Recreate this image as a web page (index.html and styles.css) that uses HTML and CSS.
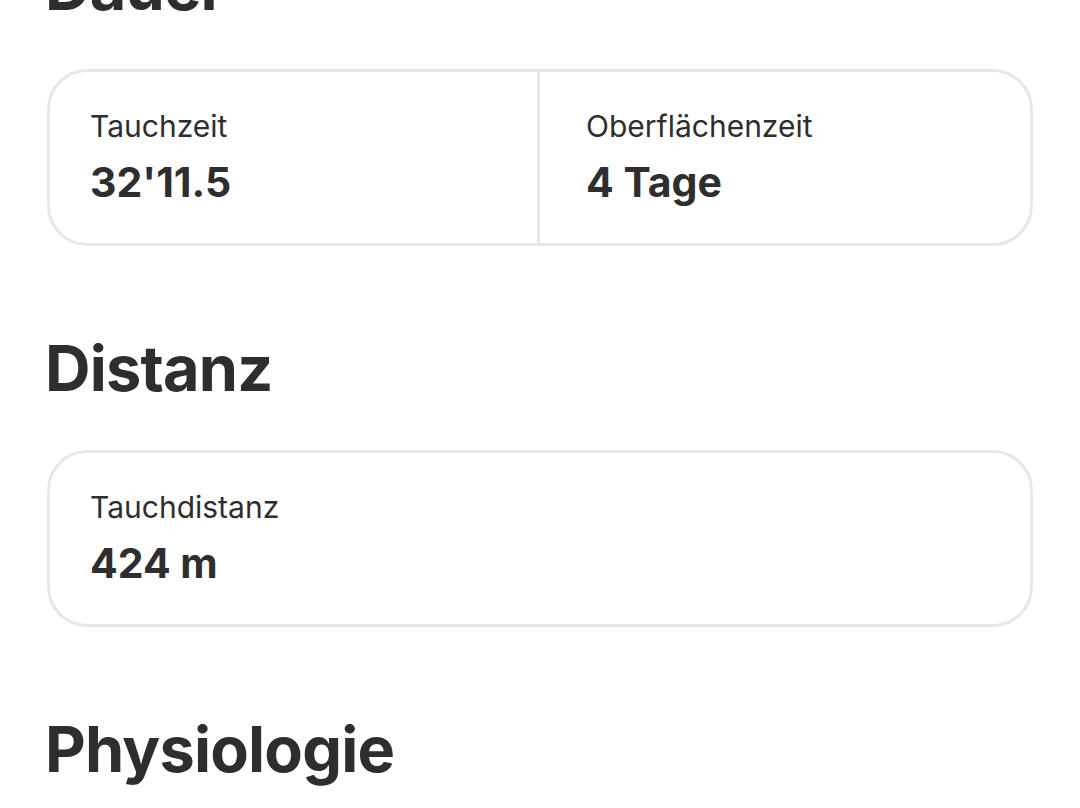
FILE: index.html
```html
<!DOCTYPE html>
<html lang="de">
<head>
<meta charset="utf-8">
<title>Tauchgang</title>
<link rel="stylesheet" href="styles.css">
</head>
<body>
<main class="page">
  <section class="section">
    <h2 class="title">Dauer</h2>
    <div class="card card-split">
      <div class="cell">
        <div class="label">Tauchzeit</div>
        <div class="value">32'11.5</div>
      </div>
      <div class="cell cell-divided">
        <div class="label">Oberflächenzeit</div>
        <div class="value">4 Tage</div>
      </div>
    </div>
  </section>
  <section class="section">
    <h2 class="title">Distanz</h2>
    <div class="card">
      <div class="cell">
        <div class="label">Tauchdistanz</div>
        <div class="value">424 m</div>
      </div>
    </div>
  </section>
  <section class="section">
    <h2 class="title">Physiologie</h2>
  </section>
</main>
</body>
</html>
```
FILE: styles.css
```css
html, body {
  margin: 0;
  padding: 0;
  background: #ffffff;
}
body {
  font-family: Inter, Lato, "Liberation Sans", sans-serif;
  color: #2e2e2e;
  overflow: hidden;
}
.page {
  margin-top: -51px;
  padding: 0 47px;
  display: flex;
  flex-direction: column;
  gap: 84px;
}
.section {
  display: flex;
  flex-direction: column;
  gap: 44px;
}
.title {
  margin: 0 0 0 -2px;
  font-size: 63px;
  line-height: 76px;
  font-weight: 700;
  letter-spacing: -0.8px;
}
.card {
  border: 3px solid #e7e7e7;
  border-radius: 40px;
  display: grid;
  grid-template-columns: 1fr;
}
.card-split {
  grid-template-columns: 1fr 1fr;
}
.cell {
  padding: 36px 40px 36px 40px;
}
.cell-divided {
  border-left: 3px solid #e7e7e7;
  margin-left: -3px;
  padding-left: 46px;
}
.label {
  font-size: 30px;
  line-height: 36px;
  font-weight: 400;
}
.value {
  margin-top: 13px;
  font-size: 41px;
  line-height: 50px;
  font-weight: 700;
}
```
